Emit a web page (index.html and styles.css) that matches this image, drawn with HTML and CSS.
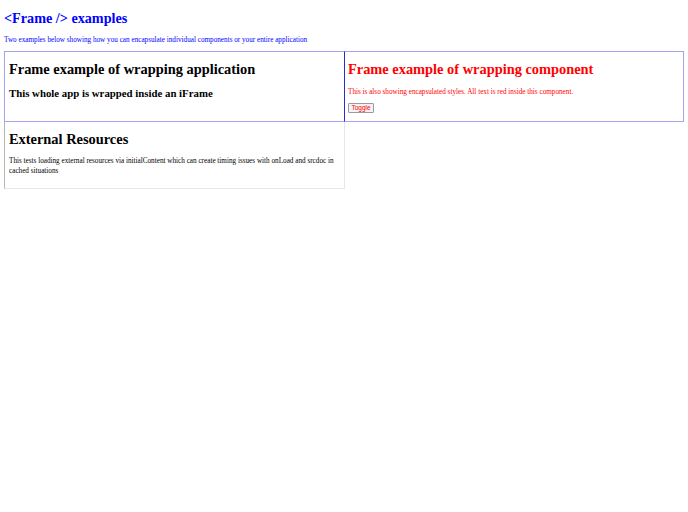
FILE: index.html
```html
<!DOCTYPE html>
<html>
<head>
<meta charset="utf-8">
<link rel="stylesheet" href="styles.css">
</head>
<body>
<h1 class="title">&lt;Frame /&gt; examples</h1>
<p class="intro">Two examples below showing how you can encapsulate individual components or your entire application</p>
<div class="frames">
  <div class="frame frame-app">
    <h1 class="fh1">Frame example of wrapping application</h1>
    <h2 class="fh2">This whole app is wrapped inside an iFrame</h2>
  </div>
  <div class="frame frame-comp">
    <h1 class="fh1">Frame example of wrapping component</h1>
    <p class="fp">This is also showing encapsulated styles. All text is red inside this component.</p>
    <button class="toggle">Toggle</button>
  </div>
  <div class="frame frame-ext">
    <h1 class="fh1">External Resources</h1>
    <p class="fp fp-ext">This tests loading external resources via initialContent which can create timing issues with onLoad and srcdoc in cached situations</p>
  </div>
</div>
</body>
</html>
```
FILE: styles.css
```css
html, body {
  background: #fff;
}
body {
  margin: 0;
  padding: 0 4px;
  font-family: "Liberation Serif", "Times New Roman", serif;
  color: blue;
}
.title {
  font-size: 14.2px;
  line-height: 15px;
  margin: 11px 0 10px;
  font-weight: bold;
}
.intro {
  font-size: 7.2px;
  line-height: 8px;
  margin: 8px 0 7px;
}
.frames {
  display: flex;
  flex-wrap: wrap;
}
.frame {
  box-sizing: border-box;
  width: 50%;
  padding: 0 4px;
  overflow: hidden;
}
.frame-app {
  height: 71px;
  width: 341px;
  border: 1px solid #a3a3ef;
  border-right-color: #2b2bd0;
  color: #000;
}
.frame-comp {
  height: 71px;
  width: 339px;
  border: 1px solid #a3a3ef;
  border-left: 0;
  padding-left: 3px;
  color: red;
}
.frame-ext {
  height: 67px;
  width: 341px;
  border: 1px solid #e6e6e6;
  border-top: 0;
  border-left-color: #b8b8b8;
  color: #000;
}
.fh1 {
  font-size: 14.4px;
  line-height: 15px;
  margin: 9.5px 0 10px;
  font-weight: bold;
}
.frame-ext .fh1 {
  margin-top: 10px;
  margin-bottom: 9px;
}
.fh2 {
  font-size: 10.8px;
  line-height: 12px;
  margin: 10.5px 0;
  font-weight: bold;
}
.fp {
  font-size: 7.2px;
  line-height: 8px;
  margin: 11.7px 0 7px;
}
.fp-ext {
  line-height: 10px;
  margin-top: 8.5px;
}
.toggle {
  display: block;
  font-family: "Liberation Sans", Arial, sans-serif;
  font-size: 6.5px;
  line-height: 7.5px;
  color: red;
  background: #f4f4f4;
  border: 1px solid #9a9a9a;
  border-radius: 1px;
  padding: 0 2.5px;
  margin: 0;
}
```
